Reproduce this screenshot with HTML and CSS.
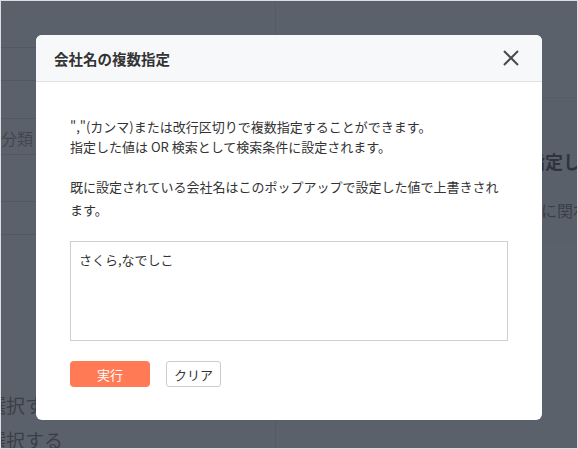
FILE: index.html
```html
<!DOCTYPE html>
<html lang="ja">
  <head>
    <meta charset="utf-8">
    <title>会社名の複数指定</title>
    <link rel="stylesheet" href="styles.css">
  </head>
  <body>
    <div class="screen">
      <!-- page behind the popup -->
      <div class="page">
        <div class="side">
          <div class="side-row side-top"></div>
          <div class="side-row side-a"></div>
          <div class="side-row side-b"></div>
          <div class="side-row side-c"><span class="side-label">分類</span></div>
          <div class="side-row side-d"></div>
          <div class="side-row side-e"></div>
          <p class="side-choice side-first">選択する</p>
          <p class="side-choice">選択する</p>
        </div>
        <div class="main">
          <div class="card">
            <h3 class="card-title">検索条件を指定してください</h3>
            <p class="card-text">条件に関わらず</p>
          </div>
        </div>
      </div>

      <div class="overlay">
        <div class="modal">
          <div class="modal-header">
            <h2 class="modal-title">会社名の複数指定</h2>
            <button class="modal-close" type="button" aria-label="閉じる">
              <svg width="16" height="16" viewBox="0 0 16 16">
                <path d="M1 1 L15 15 M15 1 L1 15" stroke="#4a4a4a" stroke-width="2" fill="none"/>
              </svg>
            </button>
          </div>
          <div class="modal-body">
            <p class="note">","(カンマ)または改行区切りで複数指定することができます。<br>指定した値は OR 検索として検索条件に設定されます。</p>
            <p class="note">既に設定されている会社名はこのポップアップで設定した値で上書きされます。</p>
            <textarea class="names">さくら,なでしこ</textarea>
            <div class="actions">
              <button class="btn btn-run" type="button">実行</button>
              <button class="btn btn-clear" type="button">クリア</button>
            </div>
          </div>
        </div>
      </div>
    </div>
  </body>
</html>
```

FILE: styles.css
```css
html,
body {
  margin: 0;
  padding: 0;
}

body {
  font-family: "Noto Sans CJK JP", "Noto Sans", sans-serif;
  color: #333;
}

.screen {
  position: relative;
  height: 449px;
  box-sizing: border-box;
  border: 1px solid #dcdde0;
  overflow: hidden;
  background: #fff;
}

/* background page */
.page {
  display: flex;
  height: 100%;
}

.side {
  flex: 0 0 274px;
  border-right: 1px solid #e6e6e6;
}

.side-row {
  border-bottom: 1px solid #dcdcdc;
  display: flex;
  align-items: center;
}

.side-top {
  height: 46px;
}

.side-a {
  height: 32px;
  margin-bottom: 5px;
}

.side-b {
  height: 32px;
  margin-bottom: 2px;
}

.side-c {
  height: 33px;
}

.side-d {
  height: 46px;
}

.side-e {
  height: 32px;
}

.side-label {
  font-size: 16px;
  color: #8a8a8a;
}

.side-choice {
  margin: 7px 0 0 -14px;
  font-size: 19px;
  color: #666;
  line-height: 28px;
  white-space: nowrap;
}

.side-first {
  margin-top: 156px;
}

.main {
  flex: 1;
  min-width: 0;
  overflow: hidden;
  padding-top: 96px;
}

.card {
  background: #fbfbfb;
  border-top: 1px solid #eee;
  height: 146px;
  padding-left: 161px;
}

.card-title {
  margin: 0;
  padding-top: 50px;
  font-size: 18px;
  color: #333;
  white-space: nowrap;
}

.card-text {
  margin: 24px 0 0 72px;
  font-size: 16px;
  color: #666;
  white-space: nowrap;
}

/* popup */
.overlay {
  position: absolute;
  inset: 0;
  background: rgba(45, 52, 64, 0.78);
  display: flex;
  justify-content: center;
  align-items: flex-start;
  padding-top: 34px;
}

.modal {
  width: 506px;
  background: #fff;
  border-radius: 6px;
  overflow: hidden;
}

.modal-header {
  height: 46px;
  background: #f7f8fa;
  border-bottom: 1px solid #e0e2e5;
  display: flex;
  align-items: center;
  justify-content: space-between;
  padding: 0 23px 0 18px;
}

.modal-title {
  margin: 0;
  font-size: 14.5px;
  font-weight: bold;
  color: #333;
}

.modal-close {
  border: 0;
  background: none;
  padding: 0;
  width: 16px;
  height: 16px;
  display: flex;
}

.modal-body {
  padding: 35px 34px 33px;
}

.note {
  margin: 0 0 20px;
  font-size: 13px;
  line-height: 20px;
  color: #333;
}

.note + .note {
  line-height: 23px;
  margin-top: -2px;
}

.names {
  display: block;
  box-sizing: border-box;
  width: 100%;
  height: 100px;
  margin-top: 20px;
  border: 1px solid #cfcfcf;
  padding: 8px;
  font-family: inherit;
  font-size: 13px;
  line-height: 20px;
  color: #333;
  resize: none;
}

.actions {
  display: flex;
  gap: 16px;
  margin-top: 20px;
}

.btn {
  height: 26px;
  font-family: inherit;
  font-size: 13px;
  border-radius: 4px;
  padding: 0;
}

.btn-run {
  width: 80px;
  background: #ff7a55;
  border: 0;
  color: #fff;
}

.btn-clear {
  width: 55px;
  background: #fff;
  border: 1px solid #cccccc;
  border-radius: 3px;
  color: #333;
}
```
